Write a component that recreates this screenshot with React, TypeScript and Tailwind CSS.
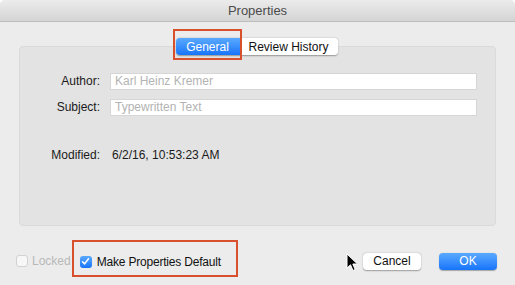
import React from 'react';

const font = { fontFamily: '"Liberation Sans", Arial, sans-serif' };

const Field = ({ label, placeholder }: { label: string; placeholder: string }) => (
  <div className="flex items-center">
    <div className="w-[80px] text-right text-[12px] text-[#1a1a1a]">{label}</div>
    <div className="ml-[10px] h-[17px] w-[367px] bg-white border border-[#d6d6d6] flex items-center pl-[4px] text-[12px] text-[#b3b3b3] leading-none">
      {placeholder}
    </div>
  </div>
);

const App = () => {
  return (
    <div style={font} className="relative w-[515px] h-[285px] bg-[#ececec] overflow-hidden rounded-t-[5px]">
      {/* title bar */}
      <div className="h-[22px] bg-gradient-to-b from-[#ececec] to-[#d4d4d4] border-b border-[#bdbdbd] flex items-center justify-center text-[13px] text-[#4b4b4b]">
        Properties
      </div>

      <div className="px-[19px]">
        {/* tabs */}
        <div className="relative z-10 mt-[16px] flex justify-center">
          <div className="flex h-[17px] ml-[-2px] rounded-[4px] shadow-[0_0.5px_1.5px_rgba(0,0,0,0.35)] text-[12px]">
            <div className="w-[64px] rounded-l-[4px] bg-gradient-to-b from-[#5aa9fd] to-[#1574fb] text-white flex items-center justify-center">
              General
            </div>
            <div className="w-[98px] rounded-r-[4px] bg-white text-[#111] flex items-center justify-center">
              Review History
            </div>
          </div>
          <div className="absolute left-[154px] top-[-9px] w-[69px] h-[31px] border-2 border-[#d9502f]" />
        </div>

        {/* panel */}
        <div className="mt-[-9px] h-[180px] rounded-[4px] bg-[#e3e3e3] border border-[#dadada] pt-[25px]">
          <div className="flex flex-col gap-[8px]">
            <Field label="Author:" placeholder="Karl Heinz Kremer" />
            <Field label="Subject:" placeholder="Typewritten Text" />
          </div>
          <div className="mt-[30px] flex items-center text-[12px] text-[#1a1a1a]">
            <div className="w-[80px] text-right">Modified:</div>
            <div className="ml-[12px]">6/2/16, 10:53:23 AM</div>
          </div>
        </div>
      </div>

      {/* bottom row */}
      <div className="mt-[14px] h-[42px] flex items-center pl-[16px] pr-[18px] text-[12px]">
        <div className="w-[12px] h-[12px] rounded-[3px] bg-[#f7f7f7] border border-[#d2d2d2]" />
        <span className="ml-[4px] text-[#b8b8b8]">Locked</span>
        <div className="self-start ml-[1px] h-[37px] w-[166px] border-2 border-[#d9502f] flex items-center pt-[6px] pl-[6px]">
          <div className="w-[12px] h-[12px] rounded-[3px] bg-gradient-to-b from-[#5aa9fd] to-[#1574fb] flex items-center justify-center">
            <svg width="9" height="9" viewBox="0 0 9 9">
              <path d="M1.5 4.8 L3.6 6.9 L7.5 1.8" fill="none" stroke="white" strokeWidth="1.5" strokeLinecap="round" strokeLinejoin="round" />
            </svg>
          </div>
          <span className="ml-[5px] text-[#111] tracking-[-0.2px]">Make Properties Default</span>
        </div>
        <div className="ml-auto flex items-center gap-[18px]">
          <div className="w-[58px] h-[17px] rounded-[4px] bg-white shadow-[0_0.5px_1.5px_rgba(0,0,0,0.35)] flex items-center justify-center text-[#111]">
            Cancel
          </div>
          <div className="w-[58px] h-[17px] rounded-[4px] bg-gradient-to-b from-[#5aa9fd] to-[#1574fb] shadow-[0_0.5px_1px_rgba(0,0,0,0.3)] flex items-center justify-center text-white">
            OK
          </div>
        </div>
      </div>

      {/* mouse cursor */}
      <svg className="absolute left-[346px] top-[253px]" width="13" height="19" viewBox="0 0 13 19">
        <path d="M1 1 L1 15 L4.5 11.8 L7 17.5 L9.2 16.5 L6.8 11 L11.5 11 Z" fill="black" stroke="white" strokeWidth="1" strokeLinejoin="round" />
      </svg>
    </div>
  );
};

export default App;
